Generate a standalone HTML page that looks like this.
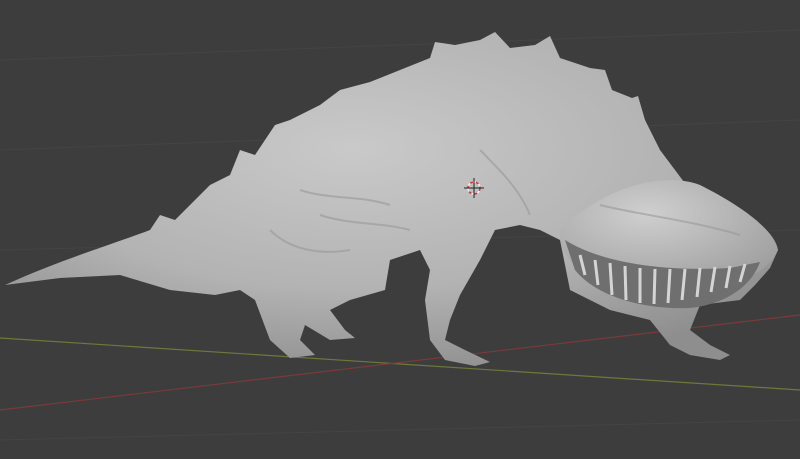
<!DOCTYPE html>
<html><head><style>
html,body{margin:0;padding:0;background:#3c3c3c;}
svg{display:block}
</style></head><body>
<svg width="800" height="459" viewBox="0 0 800 459" xmlns="http://www.w3.org/2000/svg">
<defs>
<radialGradient id="g" cx="0.45" cy="0.35" r="0.7">
<stop offset="0" stop-color="#c9c9c9"/>
<stop offset="0.6" stop-color="#b3b3b3"/>
<stop offset="1" stop-color="#8e8e8e"/>
</radialGradient>
<radialGradient id="h" cx="0.4" cy="0.3" r="0.8">
<stop offset="0" stop-color="#cfcfcf"/>
<stop offset="1" stop-color="#9a9a9a"/>
</radialGradient>
</defs>
<rect width="800" height="459" fill="#3d3d3d"/>
<g stroke="#444" stroke-width="1">
<line x1="0" y1="60" x2="800" y2="30"/>
<line x1="0" y1="150" x2="800" y2="120"/>
<line x1="0" y1="250" x2="800" y2="230"/>
<line x1="0" y1="440" x2="800" y2="420"/>
</g>
<line x1="0" y1="338" x2="800" y2="390" stroke="#6b7a3a" stroke-width="1.2"/>
<line x1="0" y1="410" x2="800" y2="315" stroke="#7a3a3a" stroke-width="1.2"/>
<!-- body -->
<path fill="url(#g)" d="M5,285 C60,260 110,245 150,230 L160,215 175,220 200,195 210,185 230,175 240,150 255,155 275,125 290,120 320,105 340,90 370,82 400,70 430,58 435,42 455,45 480,40 495,32 510,48 535,45 550,36 560,58 590,68 605,70 612,90 632,98 638,96 645,120 660,150 690,190 740,220 770,235 778,250 770,268 755,285 740,300 700,305 690,330 710,345 730,355 720,360 690,355 670,345 650,320 610,310 570,290 560,240 540,230 520,225 495,230 480,260 460,295 450,320 445,340 465,350 490,362 475,366 445,360 430,340 425,300 430,270 420,250 390,260 385,290 350,300 330,310 345,330 355,338 330,340 305,325 300,340 315,355 290,358 270,340 255,300 240,290 215,295 170,290 120,275 60,278 Z"/>
<!-- head shading -->
<path fill="url(#h)" d="M560,230 C600,190 660,170 700,185 C740,205 775,230 778,250 C770,268 750,280 720,285 C680,295 620,295 590,280 C570,265 558,248 560,230 Z"/>
<!-- mouth -->
<path fill="#6f6f6f" d="M565,240 C600,262 660,272 730,268 L760,262 C750,290 720,305 690,308 C640,310 595,295 575,270 Z"/>
<g stroke="#d4d4d4" stroke-width="3">
<line x1="580" y1="255" x2="585" y2="275"/><line x1="595" y1="260" x2="598" y2="285"/>
<line x1="610" y1="263" x2="612" y2="295"/><line x1="625" y1="266" x2="626" y2="300"/>
<line x1="640" y1="268" x2="640" y2="303"/><line x1="655" y1="269" x2="654" y2="304"/>
<line x1="670" y1="269" x2="668" y2="303"/><line x1="685" y1="269" x2="682" y2="300"/>
<line x1="700" y1="268" x2="697" y2="297"/><line x1="715" y1="267" x2="711" y2="292"/>
<line x1="730" y1="266" x2="726" y2="288"/><line x1="745" y1="264" x2="740" y2="282"/>
</g>
<!-- muscle shading -->
<g fill="none" stroke="#999" stroke-width="2" opacity="0.6">
<path d="M300,190 C330,200 360,195 390,205"/>
<path d="M320,215 C350,225 380,222 410,230"/>
<path d="M270,230 C290,250 320,255 350,250"/>
<path d="M480,150 C500,170 520,190 530,215"/>
<path d="M600,205 C640,215 690,220 740,235"/>
</g>
<!-- 3D cursor -->
<circle cx="474" cy="188" r="6" fill="none" stroke="#c33" stroke-width="1.5" stroke-dasharray="3,3"/>
<circle cx="474" cy="188" r="6" fill="none" stroke="#eee" stroke-width="1.5" stroke-dasharray="3,3" stroke-dashoffset="3"/>
<line x1="474" y1="178" x2="474" y2="198" stroke="#222" stroke-width="1"/>
<line x1="464" y1="188" x2="484" y2="188" stroke="#222" stroke-width="1"/>
</svg>
</body></html>
